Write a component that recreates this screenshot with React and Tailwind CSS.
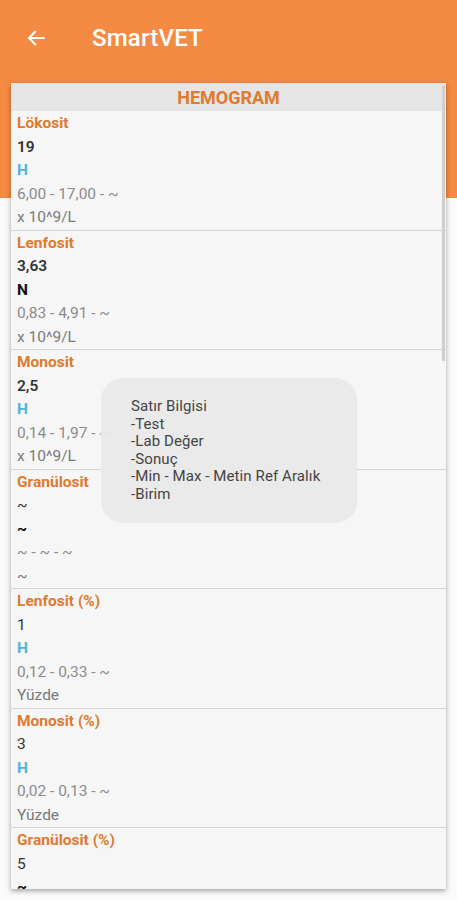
const rows = [
  { name: 'Lökosit', value: '19', bold: true, flag: 'H', range: '6,00 - 17,00 - ~', unit: 'x 10^9/L' },
  { name: 'Lenfosit', value: '3,63', bold: true, flag: 'N', range: '0,83 - 4,91 - ~', unit: 'x 10^9/L' },
  { name: 'Monosit', value: '2,5', bold: true, flag: 'H', range: '0,14 - 1,97 - ~', unit: 'x 10^9/L' },
  { name: 'Granülosit', value: '~', bold: false, flag: '~', range: '~ - ~ - ~', unit: '~' },
  { name: 'Lenfosit (%)', value: '1', bold: false, flag: 'H', range: '0,12 - 0,33 - ~', unit: 'Yüzde' },
  { name: 'Monosit (%)', value: '3', bold: false, flag: 'H', range: '0,02 - 0,13 - ~', unit: 'Yüzde' },
  { name: 'Granülosit (%)', value: '5', bold: false, flag: '~', range: '~ - ~ - ~', unit: '~' },
]

const Row = ({ r }) => {
  return (
    <div className="border-b border-[#d6d6d6] px-[6px] pt-[1px] text-[15.5px] leading-[23.5px]">
      <div className="font-bold text-[#e07a2e]">{r.name}</div>
      <div className={r.bold ? 'font-semibold text-[#333]' : 'text-[#333]'}>{r.value}</div>
      <div className={r.flag === 'H' ? 'font-bold text-[#4fb3dd]' : 'font-bold text-[#111]'}>{r.flag}</div>
      <div className="text-[#8c8c8c]">{r.range}</div>
      <div className="text-[#7a7a7a]">{r.unit}</div>
    </div>
  )
}

const App = () => {
  return (
    <div className="relative h-[900px] w-[457px] overflow-hidden bg-[#fafafa] font-['Roboto',sans-serif]">
      <div className="absolute left-0 right-0 top-0 h-[198px] bg-[#f58a42]" />
      <header className="relative flex h-[76px] items-center">
        <svg className="ml-[26px] h-[20px] w-[20px]" viewBox="0 0 24 24" fill="none" stroke="#fff" strokeWidth="2.4" strokeLinecap="square">
          <path d="M21 12H4M11 4.5 3.5 12 11 19.5" />
        </svg>
        <h1 className="ml-[46px] text-[24px] font-medium tracking-[0.2px] text-white">SmartVET</h1>
      </header>
      <div className="relative mx-[11px] mt-[7px] h-[806px] overflow-hidden bg-[#f6f6f6] shadow-[0_2px_5px_rgba(0,0,0,0.35)]">
        <div className="flex h-[28px] items-center justify-center bg-[#e5e5e5] text-[18px] font-bold text-[#e07a2e]">HEMOGRAM</div>
        {rows.map((r) => (
          <Row key={r.name} r={r} />
        ))}
        <div className="absolute right-[1px] top-[3px] h-[275px] w-[3px] bg-[#cfcfcf]" />
      </div>
      <div className="absolute left-[101px] top-[378px] w-[256px] rounded-[22px] bg-[#e9e9e9]/95 px-[30px] pt-[20px] pb-[19px] text-[15px] leading-[17.6px] tracking-[0.1px] text-[#444]">
        <div>Satır Bilgisi</div>
        <div>-Test</div>
        <div>-Lab Değer</div>
        <div>-Sonuç</div>
        <div>-Min - Max - Metin Ref Aralık</div>
        <div>-Birim</div>
      </div>
    </div>
  )
}

export default App
